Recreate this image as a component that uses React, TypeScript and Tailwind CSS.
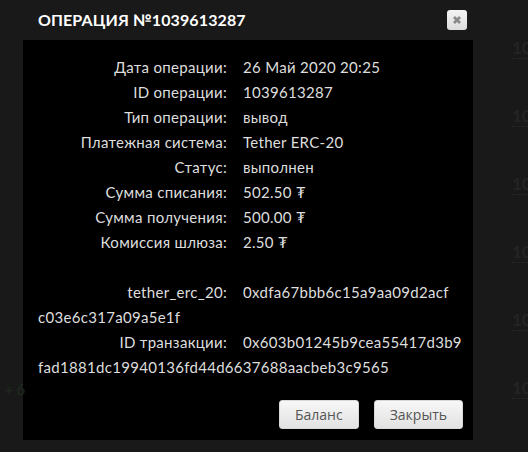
const rows: [string, string][] = [
  ["Дата операции:", "26 Май 2020 20:25"],
  ["ID операции:", "1039613287"],
  ["Тип операции:", "вывод"],
  ["Платежная система:", "Tether ERC-20"],
  ["Статус:", "выполнен"],
  ["Сумма списания:", "502.50 ₮"],
  ["Сумма получения:", "500.00 ₮"],
  ["Комиссия шлюза:", "2.50 ₮"],
];

const hashes: [string, string, string][] = [
  ["tether_erc_20:", "0xdfa67bbb6c15a9aa09d2acf", "c03e6c317a09a5e1f"],
  ["ID транзакции:", "0x603b01245b9cea55417d3b9", "fad1881dc19940136fd44d6637688aacbeb3c9565"],
];

function Label({ text }: { text: string }) {
  return <span className="inline-block w-[189px] shrink-0 text-right">{text}</span>;
}

function Button({ children }: { children: string }) {
  return (
    <button className="h-[29px] rounded-[3px] border border-[#d8d8d8] bg-gradient-to-b from-[#f7f7f7] to-[#e2e2e2] px-[15px] text-[14px] text-[#555] [font-family:'Open_Sans',sans-serif]">
      {children}
    </button>
  );
}

export default function App() {
  return (
    <div className="relative h-[452px] w-[528px] overflow-hidden bg-[#191919] [font-family:Lato,sans-serif]">
      {/* faint page content behind the modal */}
      <div className="absolute left-[512px] top-[38px] flex flex-col gap-[47px] text-[17px] font-bold text-[#242424]">
        {[0, 1, 2, 3, 4, 5].map((i) => (
          <span key={i} className="border-b border-dotted border-[#2a2a2a] leading-[20px]">
            10
          </span>
        ))}
      </div>
      <span className="absolute left-[4px] top-[378px] text-[15px] text-[#1f2a1f]">+ 6</span>

      <div className="flex h-[40px] items-center justify-between pl-[38px] pr-[61px]">
        <h1 className="text-[16px] font-bold tracking-[0.1px] text-white">ОПЕРАЦИЯ №1039613287</h1>
        <button className="flex h-[20px] w-[20px] items-center justify-center rounded-[3px] bg-gradient-to-b from-[#f4f4f4] to-[#dcdcdc]">
          <svg width="10" height="10" viewBox="0 0 10 10">
            <path d="M2 2 L8 8 M8 2 L2 8" stroke="#8a8a8a" strokeWidth="2.8" strokeLinecap="butt" />
          </svg>
        </button>
      </div>

      <div className="ml-[23px] flex h-[400px] w-[450px] flex-col bg-black">
        <div className="px-[15px] pt-[15px] text-[15px] leading-[25px] tracking-[0.3px] text-[#dedede]">
          {rows.map(([l, v]) => (
            <div key={l} className="flex gap-[16px]">
              <Label text={l} />
              <span>{v}</span>
            </div>
          ))}
          <div className="h-[25px]" />
          {hashes.map(([l, a, b]) => (
            <div key={l}>
              <div className="flex gap-[16px]">
                <Label text={l} />
                <span>{a}</span>
              </div>
              <div>{b}</div>
            </div>
          ))}
        </div>
        <div className="mt-auto flex justify-end gap-[15px] pb-[11px] pr-[10px]">
          <Button>Баланс</Button>
          <Button>Закрыть</Button>
        </div>
      </div>
    </div>
  );
}
